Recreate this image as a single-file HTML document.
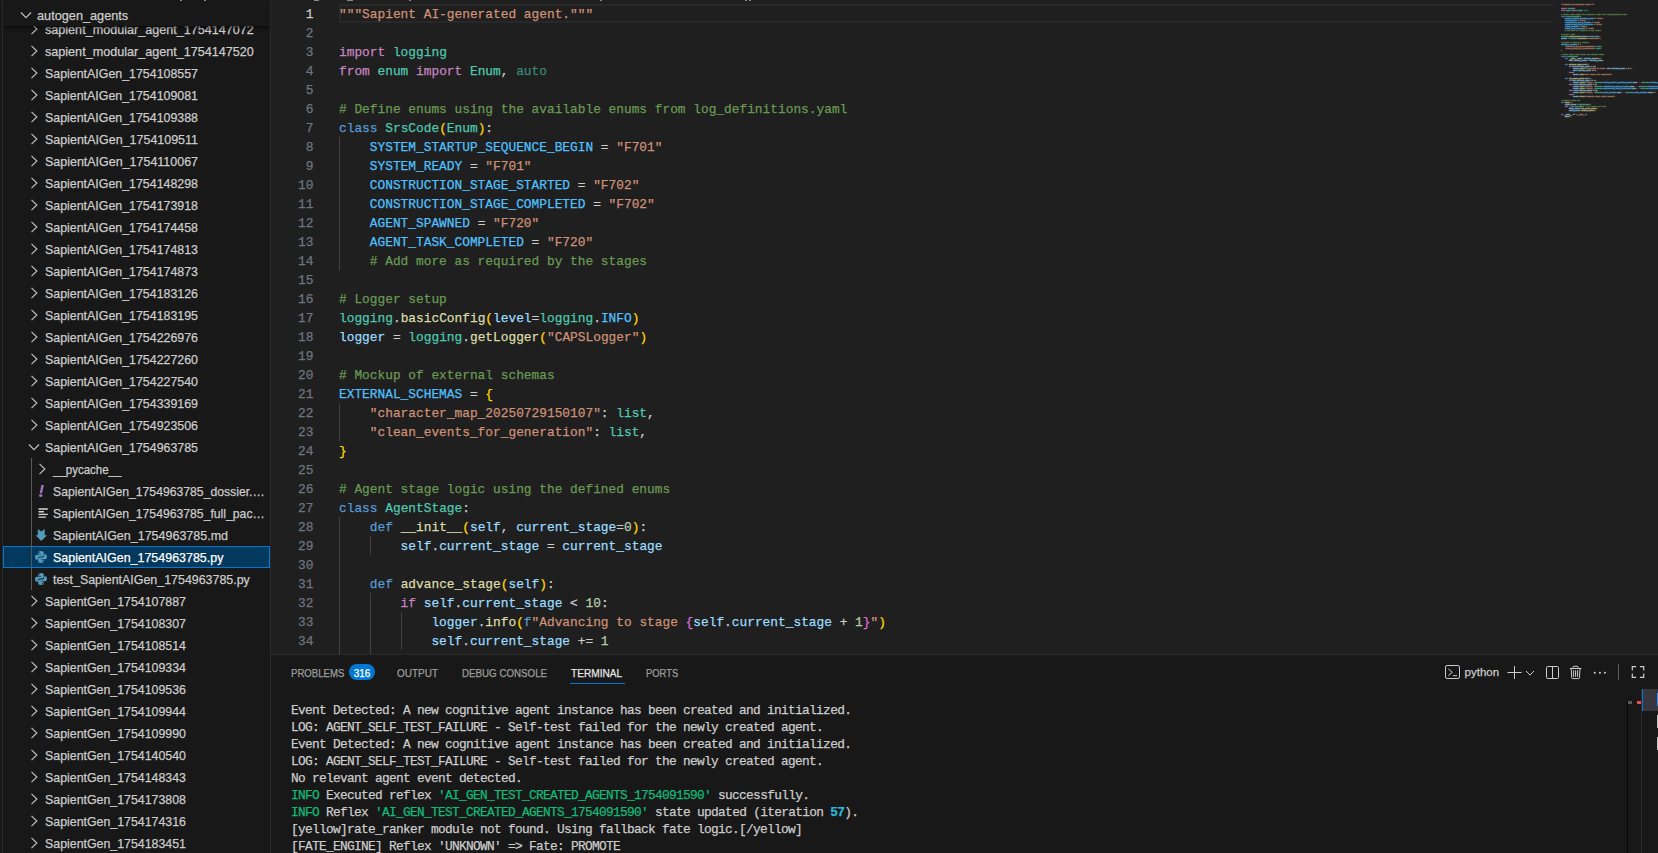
<!DOCTYPE html>
<html lang="en"><head><meta charset="utf-8"><title>SapientAIGen_1754963785.py</title>
<style>
*{box-sizing:border-box}
html,body{margin:0;padding:0}
body{-webkit-text-stroke:0.25px;width:1658px;height:853px;overflow:hidden;background:#181818;position:relative;font-family:"Liberation Sans",sans-serif;color:#cccccc}
.abs{position:absolute}
#side{position:absolute;left:0;top:0;width:271px;height:853px;background:#181818;overflow:hidden}
#side .ab{position:absolute;left:2px;top:0;width:1px;height:853px;background:#2b2b2b}
#side .sb{position:absolute;left:270px;top:0;width:1px;height:853px;background:#2b2b2b}
.row{position:absolute;left:3px;width:267px;height:22px;font-size:13px;line-height:22px;color:#cccccc}
.row i{position:absolute;top:3px;width:16px;height:16px;display:block;margin-left:-3px}
.row i svg{display:block;width:16px;height:16px}
.row .lb{position:absolute;top:1px;white-space:pre;transform-origin:0 50%;margin-left:-3px}
.row.sel{background:#04395e;outline:1px solid #0078d4;outline-offset:-1px;color:#ffffff}
.sticky{position:absolute;left:3px;top:0;width:267px;height:26px;background:#181818;box-shadow:0 3px 3px -1px rgba(0,0,0,.55);z-index:3}
.sticky .row{left:0}
.tg{position:absolute;left:31px;top:458px;width:1px;height:132px;background:#585858}
#ed{position:absolute;left:271px;top:0;width:1387px;height:654px;background:#1f1f1f;overflow:hidden}
.cur{position:absolute;left:68px;top:4px;width:1215px;height:19px;border:2px solid #282828;border-right:0}
.code,.nums{position:absolute;top:5px;font-family:"Liberation Mono",monospace;font-size:13.5px;line-height:19px;white-space:pre;transform-origin:0 0;transform:scaleX(.95062)}
.code{left:68px;color:#cccccc}
.nums{left:0;width:44.7px;text-align:right;color:#6e7681}
.cl,.ln{height:19px}
.ln.act{color:#cccccc}
.ig{position:absolute;width:1px;background:#404040;margin-left:-271px}
.k{color:#c586c0}.b{color:#569cd6}.t{color:#4ec9b0}.s{color:#ce9178}.c{color:#6a9955}.n{color:#4fc1ff}.v{color:#9cdcfe}.f{color:#dcdcaa}.u{color:#b5cea8}.g{color:#ffd700}.p{color:#da70d6}.z{color:#4ec9b0;opacity:.6}
#mini{position:absolute;left:1290px;top:3.3px;width:97px;height:400px;overflow:hidden}
#mini .mm{position:absolute;left:0;top:0;font-family:"Liberation Mono",monospace;font-size:13.5px;line-height:11px;white-space:pre;color:#cccccc;transform-origin:0 0;transform:scale(0.12346,0.181818);opacity:.7;font-weight:bold;-webkit-text-stroke:2.5px}
#mini .cl{height:11px}
#mini .g,#mini .p{opacity:.55}
#pn{position:absolute;left:271px;top:654px;width:1387px;height:199px;background:#181818;border-top:1px solid #2b2b2b;overflow:hidden}
.tab{position:absolute;top:10px;height:16px;font-size:11px;line-height:16px;color:#9d9d9d;white-space:pre;transform-origin:0 50%;margin-left:-271px}
.tab.on{color:#e7e7e7}
.ul{position:absolute;left:299px;top:28px;width:55px;height:1px;background:#0078d4}
.badge{position:absolute;left:78px;top:9px;width:26px;height:16px;border-radius:8px;background:#0078d4;color:#fff;font-size:10px;line-height:19px;text-align:center;overflow:hidden}
.term{position:absolute;left:20px;top:47px;font-family:"Liberation Mono",monospace;font-size:13.5px;letter-spacing:-0.736px;line-height:17px;white-space:pre;color:#cccccc;transform-origin:0 0;transform:scaleX(.95062)}
.tl{height:17px}
.pi{position:absolute;left:1169px;top:0}
.pyl{position:absolute;left:1193.6px;top:8.6px;font-size:11.5px;line-height:16px;color:#cccccc;transform-origin:0 50%;white-space:pre}
.ovr{position:absolute;left:1356px;top:46px;width:1px;height:160px;background:#050608}
.mk{position:absolute;top:46px;width:4px;height:3px}
.tlb{position:absolute;left:1370px;top:34px;width:1px;height:170px;background:#2b2b2b}
.tsel{position:absolute;left:1371px;top:34px;width:16px;height:22px;background:#37373d}
.tblue{position:absolute;left:1371px;top:34px;width:1px;height:22px;background:#0078d4}
.tic{position:absolute;left:1386px;width:1px;height:13px}
.tm{position:absolute;top:0;height:1px;background:#8a8a8a;z-index:5}
.gr{color:#0dbc79}.cy{color:#29b8db;font-weight:bold}
</style></head><body>
<div id="side">
<div class="ab"></div>
<div class="row" style="top:18px"><i style="left:26.2px"><svg class="chev" viewBox="0 0 16 16"><path d="M5.5 2.8 L10.9 8 L5.5 13.2" fill="none" stroke="#c5c5c5" stroke-width="1.1"/></svg></i><span class="lb" style="left:45.0px;transform:scaleX(0.9693)">sapient_modular_agent_1754147072</span></div>
<div class="row" style="top:40px"><i style="left:26.2px"><svg class="chev" viewBox="0 0 16 16"><path d="M5.5 2.8 L10.9 8 L5.5 13.2" fill="none" stroke="#c5c5c5" stroke-width="1.1"/></svg></i><span class="lb" style="left:45.0px;transform:scaleX(0.9693)">sapient_modular_agent_1754147520</span></div>
<div class="row" style="top:62px"><i style="left:26.2px"><svg class="chev" viewBox="0 0 16 16"><path d="M5.5 2.8 L10.9 8 L5.5 13.2" fill="none" stroke="#c5c5c5" stroke-width="1.1"/></svg></i><span class="lb" style="left:45.0px;transform:scaleX(0.9534)">SapientAIGen_1754108557</span></div>
<div class="row" style="top:84px"><i style="left:26.2px"><svg class="chev" viewBox="0 0 16 16"><path d="M5.5 2.8 L10.9 8 L5.5 13.2" fill="none" stroke="#c5c5c5" stroke-width="1.1"/></svg></i><span class="lb" style="left:45.0px;transform:scaleX(0.9534)">SapientAIGen_1754109081</span></div>
<div class="row" style="top:106px"><i style="left:26.2px"><svg class="chev" viewBox="0 0 16 16"><path d="M5.5 2.8 L10.9 8 L5.5 13.2" fill="none" stroke="#c5c5c5" stroke-width="1.1"/></svg></i><span class="lb" style="left:45.0px;transform:scaleX(0.9534)">SapientAIGen_1754109388</span></div>
<div class="row" style="top:128px"><i style="left:26.2px"><svg class="chev" viewBox="0 0 16 16"><path d="M5.5 2.8 L10.9 8 L5.5 13.2" fill="none" stroke="#c5c5c5" stroke-width="1.1"/></svg></i><span class="lb" style="left:45.0px;transform:scaleX(0.9592)">SapientAIGen_1754109511</span></div>
<div class="row" style="top:150px"><i style="left:26.2px"><svg class="chev" viewBox="0 0 16 16"><path d="M5.5 2.8 L10.9 8 L5.5 13.2" fill="none" stroke="#c5c5c5" stroke-width="1.1"/></svg></i><span class="lb" style="left:45.0px;transform:scaleX(0.9592)">SapientAIGen_1754110067</span></div>
<div class="row" style="top:172px"><i style="left:26.2px"><svg class="chev" viewBox="0 0 16 16"><path d="M5.5 2.8 L10.9 8 L5.5 13.2" fill="none" stroke="#c5c5c5" stroke-width="1.1"/></svg></i><span class="lb" style="left:45.0px;transform:scaleX(0.9534)">SapientAIGen_1754148298</span></div>
<div class="row" style="top:194px"><i style="left:26.2px"><svg class="chev" viewBox="0 0 16 16"><path d="M5.5 2.8 L10.9 8 L5.5 13.2" fill="none" stroke="#c5c5c5" stroke-width="1.1"/></svg></i><span class="lb" style="left:45.0px;transform:scaleX(0.9534)">SapientAIGen_1754173918</span></div>
<div class="row" style="top:216px"><i style="left:26.2px"><svg class="chev" viewBox="0 0 16 16"><path d="M5.5 2.8 L10.9 8 L5.5 13.2" fill="none" stroke="#c5c5c5" stroke-width="1.1"/></svg></i><span class="lb" style="left:45.0px;transform:scaleX(0.9534)">SapientAIGen_1754174458</span></div>
<div class="row" style="top:238px"><i style="left:26.2px"><svg class="chev" viewBox="0 0 16 16"><path d="M5.5 2.8 L10.9 8 L5.5 13.2" fill="none" stroke="#c5c5c5" stroke-width="1.1"/></svg></i><span class="lb" style="left:45.0px;transform:scaleX(0.9534)">SapientAIGen_1754174813</span></div>
<div class="row" style="top:260px"><i style="left:26.2px"><svg class="chev" viewBox="0 0 16 16"><path d="M5.5 2.8 L10.9 8 L5.5 13.2" fill="none" stroke="#c5c5c5" stroke-width="1.1"/></svg></i><span class="lb" style="left:45.0px;transform:scaleX(0.9534)">SapientAIGen_1754174873</span></div>
<div class="row" style="top:282px"><i style="left:26.2px"><svg class="chev" viewBox="0 0 16 16"><path d="M5.5 2.8 L10.9 8 L5.5 13.2" fill="none" stroke="#c5c5c5" stroke-width="1.1"/></svg></i><span class="lb" style="left:45.0px;transform:scaleX(0.9534)">SapientAIGen_1754183126</span></div>
<div class="row" style="top:304px"><i style="left:26.2px"><svg class="chev" viewBox="0 0 16 16"><path d="M5.5 2.8 L10.9 8 L5.5 13.2" fill="none" stroke="#c5c5c5" stroke-width="1.1"/></svg></i><span class="lb" style="left:45.0px;transform:scaleX(0.9534)">SapientAIGen_1754183195</span></div>
<div class="row" style="top:326px"><i style="left:26.2px"><svg class="chev" viewBox="0 0 16 16"><path d="M5.5 2.8 L10.9 8 L5.5 13.2" fill="none" stroke="#c5c5c5" stroke-width="1.1"/></svg></i><span class="lb" style="left:45.0px;transform:scaleX(0.9534)">SapientAIGen_1754226976</span></div>
<div class="row" style="top:348px"><i style="left:26.2px"><svg class="chev" viewBox="0 0 16 16"><path d="M5.5 2.8 L10.9 8 L5.5 13.2" fill="none" stroke="#c5c5c5" stroke-width="1.1"/></svg></i><span class="lb" style="left:45.0px;transform:scaleX(0.9534)">SapientAIGen_1754227260</span></div>
<div class="row" style="top:370px"><i style="left:26.2px"><svg class="chev" viewBox="0 0 16 16"><path d="M5.5 2.8 L10.9 8 L5.5 13.2" fill="none" stroke="#c5c5c5" stroke-width="1.1"/></svg></i><span class="lb" style="left:45.0px;transform:scaleX(0.9534)">SapientAIGen_1754227540</span></div>
<div class="row" style="top:392px"><i style="left:26.2px"><svg class="chev" viewBox="0 0 16 16"><path d="M5.5 2.8 L10.9 8 L5.5 13.2" fill="none" stroke="#c5c5c5" stroke-width="1.1"/></svg></i><span class="lb" style="left:45.0px;transform:scaleX(0.9534)">SapientAIGen_1754339169</span></div>
<div class="row" style="top:414px"><i style="left:26.2px"><svg class="chev" viewBox="0 0 16 16"><path d="M5.5 2.8 L10.9 8 L5.5 13.2" fill="none" stroke="#c5c5c5" stroke-width="1.1"/></svg></i><span class="lb" style="left:45.0px;transform:scaleX(0.9534)">SapientAIGen_1754923506</span></div>
<div class="row" style="top:436px"><i style="left:26.2px"><svg class="chev" viewBox="0 0 16 16"><path d="M2.9 5.5 L8 10.6 L13.1 5.5" fill="none" stroke="#c5c5c5" stroke-width="1.1"/></svg></i><span class="lb" style="left:45.0px;transform:scaleX(0.9534)">SapientAIGen_1754963785</span></div>
<div class="row" style="top:458px"><i style="left:34.2px"><svg class="chev" viewBox="0 0 16 16"><path d="M5.5 2.8 L10.9 8 L5.5 13.2" fill="none" stroke="#c5c5c5" stroke-width="1.1"/></svg></i><span class="lb" style="left:53.0px;transform:scaleX(0.8844)">__pycache__</span></div>
<div class="row" style="top:480px"><i style="left:32.5px"><svg class="fi" viewBox="0 0 16 16"><path d="M8.3 1.9 L10.9 1.9 L9.1 10.2 L6.8 10.2 Z" fill="#a074c4"/><ellipse cx="7.7" cy="12.6" rx="1.7" ry="1.5" fill="#a074c4"/></svg></i><span class="lb" style="left:53.0px;transform:scaleX(0.9387)">SapientAIGen_1754963785_dossier.…</span></div>
<div class="row" style="top:502px"><i style="left:32.5px"><svg class="fi" viewBox="0 0 16 16"><g stroke="#d4d7d6" stroke-width="1.35"><path d="M5.5 4H14.8M5.5 6.7H11M5.5 9.4H14.8M5.5 12.1H12.9"/></g></svg></i><span class="lb" style="left:53.0px;transform:scaleX(0.9387)">SapientAIGen_1754963785_full_pac…</span></div>
<div class="row" style="top:524px"><i style="left:32.5px"><svg class="fi" viewBox="0 0 16 16"><path d="M4.8 2.1 L8.3 4.4 L11.7 2.1 L11.7 8.3 L14.1 8.3 L8.3 14.1 L2.5 8.3 L4.8 8.3 Z" fill="#519aba"/></svg></i><span class="lb" style="left:53.0px;transform:scaleX(0.9607)">SapientAIGen_1754963785.md</span></div>
<div class="row sel" style="top:546px"><i style="left:33.0px"><svg class="fi" viewBox="0 0 16 16"><g fill="#519aba"><path d="M7.9 2C5.9 2 5.4 2.9 5.4 3.7V5.2H8.1V5.8H3.9C2.9 5.8 2 6.6 2 8.3C2 10 2.8 10.8 3.8 10.8H4.9V9.2C4.9 8.2 5.8 7.4 6.8 7.4H9.4C10.2 7.4 10.8 6.8 10.8 6V3.7C10.8 2.8 10 2 7.9 2ZM6.5 2.9A.5.5 0 1 1 6.5 3.9A.5.5 0 0 1 6.5 2.9Z"/><path d="M8.1 14C10.1 14 10.6 13.1 10.6 12.3V10.8H7.9V10.2H12.1C13.1 10.2 14 9.4 14 7.7C14 6 13.2 5.2 12.2 5.2H11.1V6.8C11.1 7.8 10.2 8.6 9.2 8.6H6.6C5.8 8.6 5.2 9.2 5.2 10V12.3C5.2 13.2 6 14 8.1 14ZM9.5 13.1A.5.5 0 1 1 9.5 12.1A.5.5 0 0 1 9.5 13.1Z"/></g></svg></i><span class="lb" style="left:53.0px;transform:scaleX(0.9582)">SapientAIGen_1754963785.py</span></div>
<div class="row" style="top:568px"><i style="left:33.0px"><svg class="fi" viewBox="0 0 16 16"><g fill="#519aba"><path d="M7.9 2C5.9 2 5.4 2.9 5.4 3.7V5.2H8.1V5.8H3.9C2.9 5.8 2 6.6 2 8.3C2 10 2.8 10.8 3.8 10.8H4.9V9.2C4.9 8.2 5.8 7.4 6.8 7.4H9.4C10.2 7.4 10.8 6.8 10.8 6V3.7C10.8 2.8 10 2 7.9 2ZM6.5 2.9A.5.5 0 1 1 6.5 3.9A.5.5 0 0 1 6.5 2.9Z"/><path d="M8.1 14C10.1 14 10.6 13.1 10.6 12.3V10.8H7.9V10.2H12.1C13.1 10.2 14 9.4 14 7.7C14 6 13.2 5.2 12.2 5.2H11.1V6.8C11.1 7.8 10.2 8.6 9.2 8.6H6.6C5.8 8.6 5.2 9.2 5.2 10V12.3C5.2 13.2 6 14 8.1 14ZM9.5 13.1A.5.5 0 1 1 9.5 12.1A.5.5 0 0 1 9.5 13.1Z"/></g></svg></i><span class="lb" style="left:53.0px;transform:scaleX(0.9553)">test_SapientAIGen_1754963785.py</span></div>
<div class="row" style="top:590px"><i style="left:26.2px"><svg class="chev" viewBox="0 0 16 16"><path d="M5.5 2.8 L10.9 8 L5.5 13.2" fill="none" stroke="#c5c5c5" stroke-width="1.1"/></svg></i><span class="lb" style="left:45.0px;transform:scaleX(0.9514)">SapientGen_1754107887</span></div>
<div class="row" style="top:612px"><i style="left:26.2px"><svg class="chev" viewBox="0 0 16 16"><path d="M5.5 2.8 L10.9 8 L5.5 13.2" fill="none" stroke="#c5c5c5" stroke-width="1.1"/></svg></i><span class="lb" style="left:45.0px;transform:scaleX(0.9514)">SapientGen_1754108307</span></div>
<div class="row" style="top:634px"><i style="left:26.2px"><svg class="chev" viewBox="0 0 16 16"><path d="M5.5 2.8 L10.9 8 L5.5 13.2" fill="none" stroke="#c5c5c5" stroke-width="1.1"/></svg></i><span class="lb" style="left:45.0px;transform:scaleX(0.9514)">SapientGen_1754108514</span></div>
<div class="row" style="top:656px"><i style="left:26.2px"><svg class="chev" viewBox="0 0 16 16"><path d="M5.5 2.8 L10.9 8 L5.5 13.2" fill="none" stroke="#c5c5c5" stroke-width="1.1"/></svg></i><span class="lb" style="left:45.0px;transform:scaleX(0.9514)">SapientGen_1754109334</span></div>
<div class="row" style="top:678px"><i style="left:26.2px"><svg class="chev" viewBox="0 0 16 16"><path d="M5.5 2.8 L10.9 8 L5.5 13.2" fill="none" stroke="#c5c5c5" stroke-width="1.1"/></svg></i><span class="lb" style="left:45.0px;transform:scaleX(0.9514)">SapientGen_1754109536</span></div>
<div class="row" style="top:700px"><i style="left:26.2px"><svg class="chev" viewBox="0 0 16 16"><path d="M5.5 2.8 L10.9 8 L5.5 13.2" fill="none" stroke="#c5c5c5" stroke-width="1.1"/></svg></i><span class="lb" style="left:45.0px;transform:scaleX(0.9514)">SapientGen_1754109944</span></div>
<div class="row" style="top:722px"><i style="left:26.2px"><svg class="chev" viewBox="0 0 16 16"><path d="M5.5 2.8 L10.9 8 L5.5 13.2" fill="none" stroke="#c5c5c5" stroke-width="1.1"/></svg></i><span class="lb" style="left:45.0px;transform:scaleX(0.9514)">SapientGen_1754109990</span></div>
<div class="row" style="top:744px"><i style="left:26.2px"><svg class="chev" viewBox="0 0 16 16"><path d="M5.5 2.8 L10.9 8 L5.5 13.2" fill="none" stroke="#c5c5c5" stroke-width="1.1"/></svg></i><span class="lb" style="left:45.0px;transform:scaleX(0.9514)">SapientGen_1754140540</span></div>
<div class="row" style="top:766px"><i style="left:26.2px"><svg class="chev" viewBox="0 0 16 16"><path d="M5.5 2.8 L10.9 8 L5.5 13.2" fill="none" stroke="#c5c5c5" stroke-width="1.1"/></svg></i><span class="lb" style="left:45.0px;transform:scaleX(0.9514)">SapientGen_1754148343</span></div>
<div class="row" style="top:788px"><i style="left:26.2px"><svg class="chev" viewBox="0 0 16 16"><path d="M5.5 2.8 L10.9 8 L5.5 13.2" fill="none" stroke="#c5c5c5" stroke-width="1.1"/></svg></i><span class="lb" style="left:45.0px;transform:scaleX(0.9514)">SapientGen_1754173808</span></div>
<div class="row" style="top:810px"><i style="left:26.2px"><svg class="chev" viewBox="0 0 16 16"><path d="M5.5 2.8 L10.9 8 L5.5 13.2" fill="none" stroke="#c5c5c5" stroke-width="1.1"/></svg></i><span class="lb" style="left:45.0px;transform:scaleX(0.9514)">SapientGen_1754174316</span></div>
<div class="row" style="top:832px"><i style="left:26.2px"><svg class="chev" viewBox="0 0 16 16"><path d="M5.5 2.8 L10.9 8 L5.5 13.2" fill="none" stroke="#c5c5c5" stroke-width="1.1"/></svg></i><span class="lb" style="left:45.0px;transform:scaleX(0.9514)">SapientGen_1754183451</span></div>
<div class="tg"></div>
<div class="sticky"><div class="row" style="top:4px"><i style="left:18px"><svg class="chev" viewBox="0 0 16 16"><path d="M2.9 5.5 L8 10.6 L13.1 5.5" fill="none" stroke="#c5c5c5" stroke-width="1.1"/></svg></i><span class="lb" style="left:37px;transform:scaleX(0.9779)">autogen_agents</span></div></div>
<div class="sb"></div>
</div>
<div id="ed">
<div class="cur"></div>
<div class="ig" style="left:339px;top:137px;height:133px"></div>
<div class="ig" style="left:339px;top:403px;height:38px"></div>
<div class="ig" style="left:339px;top:517px;height:171px"></div>
<div class="ig" style="left:370px;top:536px;height:19px"></div>
<div class="ig" style="left:370px;top:593px;height:95px"></div>
<div class="ig" style="left:401px;top:612px;height:38px"></div>
<div class="nums"><div class="ln act">1</div><div class="ln">2</div><div class="ln">3</div><div class="ln">4</div><div class="ln">5</div><div class="ln">6</div><div class="ln">7</div><div class="ln">8</div><div class="ln">9</div><div class="ln">10</div><div class="ln">11</div><div class="ln">12</div><div class="ln">13</div><div class="ln">14</div><div class="ln">15</div><div class="ln">16</div><div class="ln">17</div><div class="ln">18</div><div class="ln">19</div><div class="ln">20</div><div class="ln">21</div><div class="ln">22</div><div class="ln">23</div><div class="ln">24</div><div class="ln">25</div><div class="ln">26</div><div class="ln">27</div><div class="ln">28</div><div class="ln">29</div><div class="ln">30</div><div class="ln">31</div><div class="ln">32</div><div class="ln">33</div><div class="ln">34</div><div class="ln">35</div></div>
<div class="code"><div class="cl"><span class="s">&quot;&quot;&quot;Sapient AI-generated agent.&quot;&quot;&quot;</span></div><div class="cl"></div><div class="cl"><span class="k">import</span> <span class="t">logging</span></div><div class="cl"><span class="k">from</span> <span class="t">enum</span> <span class="k">import</span> <span class="t">Enum</span>, <span class="z">auto</span></div><div class="cl"></div><div class="cl"><span class="c"># Define enums using the available enums from log_definitions.yaml</span></div><div class="cl"><span class="b">class</span> <span class="t">SrsCode</span><span class="g">(</span><span class="t">Enum</span><span class="g">)</span>:</div><div class="cl">    <span class="n">SYSTEM_STARTUP_SEQUENCE_BEGIN</span> = <span class="s">&quot;F701&quot;</span></div><div class="cl">    <span class="n">SYSTEM_READY</span> = <span class="s">&quot;F701&quot;</span></div><div class="cl">    <span class="n">CONSTRUCTION_STAGE_STARTED</span> = <span class="s">&quot;F702&quot;</span></div><div class="cl">    <span class="n">CONSTRUCTION_STAGE_COMPLETED</span> = <span class="s">&quot;F702&quot;</span></div><div class="cl">    <span class="n">AGENT_SPAWNED</span> = <span class="s">&quot;F720&quot;</span></div><div class="cl">    <span class="n">AGENT_TASK_COMPLETED</span> = <span class="s">&quot;F720&quot;</span></div><div class="cl">    <span class="c"># Add more as required by the stages</span></div><div class="cl"></div><div class="cl"><span class="c"># Logger setup</span></div><div class="cl"><span class="t">logging</span>.<span class="f">basicConfig</span><span class="g">(</span><span class="v">level</span>=<span class="t">logging</span>.<span class="n">INFO</span><span class="g">)</span></div><div class="cl"><span class="v">logger</span> = <span class="t">logging</span>.<span class="f">getLogger</span><span class="g">(</span><span class="s">&quot;CAPSLogger&quot;</span><span class="g">)</span></div><div class="cl"></div><div class="cl"><span class="c"># Mockup of external schemas</span></div><div class="cl"><span class="n">EXTERNAL_SCHEMAS</span> = <span class="g">{</span></div><div class="cl">    <span class="s">&quot;character_map_20250729150107&quot;</span>: <span class="t">list</span>,</div><div class="cl">    <span class="s">&quot;clean_events_for_generation&quot;</span>: <span class="t">list</span>,</div><div class="cl"><span class="g">}</span></div><div class="cl"></div><div class="cl"><span class="c"># Agent stage logic using the defined enums</span></div><div class="cl"><span class="b">class</span> <span class="t">AgentStage</span>:</div><div class="cl">    <span class="b">def</span> <span class="f">__init__</span><span class="g">(</span><span class="v">self</span>, <span class="v">current_stage</span>=<span class="u">0</span><span class="g">)</span>:</div><div class="cl">        <span class="v">self</span>.<span class="v">current_stage</span> = <span class="v">current_stage</span></div><div class="cl"></div><div class="cl">    <span class="b">def</span> <span class="f">advance_stage</span><span class="g">(</span><span class="v">self</span><span class="g">)</span>:</div><div class="cl">        <span class="k">if</span> <span class="v">self</span>.<span class="v">current_stage</span> &lt; <span class="u">10</span>:</div><div class="cl">            <span class="v">logger</span>.<span class="f">info</span><span class="g">(</span><span class="b">f</span><span class="s">&quot;Advancing to stage </span><span class="p">{</span><span class="v">self</span>.<span class="v">current_stage</span> + <span class="u">1</span><span class="p">}</span><span class="s">&quot;</span><span class="g">)</span></div><div class="cl">            <span class="v">self</span>.<span class="v">current_stage</span> += <span class="u">1</span></div><div class="cl">        <span class="k">else</span>:</div></div>
<div id="mini"><div class="mm"><div class="cl"><span class="s">&quot;&quot;&quot;Sapient AI-generated agent.&quot;&quot;&quot;</span></div><div class="cl"></div><div class="cl"><span class="k">import</span> <span class="t">logging</span></div><div class="cl"><span class="k">from</span> <span class="t">enum</span> <span class="k">import</span> <span class="t">Enum</span>, <span class="z">auto</span></div><div class="cl"></div><div class="cl"><span class="c"># Define enums using the available enums from log_definitions.yaml</span></div><div class="cl"><span class="b">class</span> <span class="t">SrsCode</span><span class="g">(</span><span class="t">Enum</span><span class="g">)</span>:</div><div class="cl">    <span class="n">SYSTEM_STARTUP_SEQUENCE_BEGIN</span> = <span class="s">&quot;F701&quot;</span></div><div class="cl">    <span class="n">SYSTEM_READY</span> = <span class="s">&quot;F701&quot;</span></div><div class="cl">    <span class="n">CONSTRUCTION_STAGE_STARTED</span> = <span class="s">&quot;F702&quot;</span></div><div class="cl">    <span class="n">CONSTRUCTION_STAGE_COMPLETED</span> = <span class="s">&quot;F702&quot;</span></div><div class="cl">    <span class="n">AGENT_SPAWNED</span> = <span class="s">&quot;F720&quot;</span></div><div class="cl">    <span class="n">AGENT_TASK_COMPLETED</span> = <span class="s">&quot;F720&quot;</span></div><div class="cl">    <span class="c"># Add more as required by the stages</span></div><div class="cl"></div><div class="cl"><span class="c"># Logger setup</span></div><div class="cl"><span class="t">logging</span>.<span class="f">basicConfig</span><span class="g">(</span><span class="v">level</span>=<span class="t">logging</span>.<span class="n">INFO</span><span class="g">)</span></div><div class="cl"><span class="v">logger</span> = <span class="t">logging</span>.<span class="f">getLogger</span><span class="g">(</span><span class="s">&quot;CAPSLogger&quot;</span><span class="g">)</span></div><div class="cl"></div><div class="cl"><span class="c"># Mockup of external schemas</span></div><div class="cl"><span class="n">EXTERNAL_SCHEMAS</span> = <span class="g">{</span></div><div class="cl">    <span class="s">&quot;character_map_20250729150107&quot;</span>: <span class="t">list</span>,</div><div class="cl">    <span class="s">&quot;clean_events_for_generation&quot;</span>: <span class="t">list</span>,</div><div class="cl"><span class="g">}</span></div><div class="cl"></div><div class="cl"><span class="c"># Agent stage logic using the defined enums</span></div><div class="cl"><span class="b">class</span> <span class="t">AgentStage</span>:</div><div class="cl">    <span class="b">def</span> <span class="f">__init__</span><span class="g">(</span><span class="v">self</span>, <span class="v">current_stage</span>=<span class="u">0</span><span class="g">)</span>:</div><div class="cl">        <span class="v">self</span>.<span class="v">current_stage</span> = <span class="v">current_stage</span></div><div class="cl"></div><div class="cl">    <span class="b">def</span> <span class="f">advance_stage</span><span class="g">(</span><span class="v">self</span><span class="g">)</span>:</div><div class="cl">        <span class="k">if</span> <span class="v">self</span>.<span class="v">current_stage</span> &lt; <span class="u">10</span>:</div><div class="cl">            <span class="v">logger</span>.<span class="f">info</span><span class="g">(</span><span class="b">f</span><span class="s">&quot;Advancing to stage </span><span class="p">{</span><span class="v">self</span>.<span class="v">current_stage</span> + <span class="u">1</span><span class="p">}</span><span class="s">&quot;</span><span class="g">)</span></div><div class="cl">            <span class="v">self</span>.<span class="v">current_stage</span> += <span class="u">1</span></div><div class="cl">        <span class="k">else</span>:</div><div class="cl">            <span class="v">logger</span>.<span class="f">info</span><span class="g">(</span><span class="s">&quot;All stages are completed&quot;</span><span class="g">)</span></div><div class="cl"></div><div class="cl">    <span class="b">def</span> <span class="f">log_stage_event</span><span class="g">(</span><span class="v">self</span><span class="g">)</span>:</div><div class="cl">        <span class="k">if</span> <span class="v">self</span>.<span class="v">current_stage</span> == <span class="u">0</span>:</div><div class="cl">            <span class="v">logger</span>.<span class="f">info</span><span class="g">(</span><span class="b">f</span><span class="s">&quot;Event: </span><span class="p">{</span><span class="t">SrsCode</span>.<span class="n">SYSTEM_STARTUP_SEQUENCE_BEGIN</span>.<span class="v">name</span><span class="p">}</span><span class="s"> - </span><span class="p">{</span><span class="t">SrsCode</span>.<span class="n">SYSTEM_STARTUP_SEQUENCE_BEGIN</span>.<span class="v">value</span><span class="p">}</span><span class="s">&quot;</span><span class="g">)</span></div><div class="cl">        <span class="k">elif</span> <span class="v">self</span>.<span class="v">current_stage</span> &lt; <span class="u">5</span>:</div><div class="cl">            <span class="v">logger</span>.<span class="f">info</span><span class="g">(</span><span class="b">f</span><span class="s">&quot;Event: </span><span class="p">{</span><span class="t">SrsCode</span>.<span class="n">CONSTRUCTION_STAGE_STARTED</span>.<span class="v">name</span><span class="p">}</span><span class="s"> - </span><span class="p">{</span><span class="t">SrsCode</span>.<span class="n">CONSTRUCTION_STAGE_STARTED</span>.<span class="v">value</span><span class="p">}</span><span class="s">&quot;</span><span class="g">)</span></div><div class="cl">            <span class="v">logger</span>.<span class="f">info</span><span class="g">(</span><span class="b">f</span><span class="s">&quot;Event: </span><span class="p">{</span><span class="t">SrsCode</span>.<span class="n">CONSTRUCTION_STAGE_COMPLETED</span>.<span class="v">name</span><span class="p">}</span><span class="s"> - </span><span class="p">{</span><span class="t">SrsCode</span>.<span class="n">CONSTRUCTION_STAGE_COMPLETED</span>.<span class="v">value</span><span class="p">}</span><span class="s">&quot;</span><span class="g">)</span></div><div class="cl">        <span class="k">elif</span> <span class="v">self</span>.<span class="v">current_stage</span> &lt; <span class="u">10</span>:</div><div class="cl">            <span class="v">logger</span>.<span class="f">info</span><span class="g">(</span><span class="b">f</span><span class="s">&quot;Event: </span><span class="p">{</span><span class="t">SrsCode</span>.<span class="n">AGENT_SPAWNED</span>.<span class="v">name</span><span class="p">}</span><span class="s"> - </span><span class="p">{</span><span class="t">SrsCode</span>.<span class="n">AGENT_SPAWNED</span>.<span class="v">value</span><span class="p">}</span><span class="s">&quot;</span><span class="g">)</span></div><div class="cl">        <span class="k">else</span>:</div><div class="cl">            <span class="v">logger</span>.<span class="f">error</span><span class="g">(</span><span class="s">&quot;Unknown stage event logged&quot;</span><span class="g">)</span></div><div class="cl"></div><div class="cl"><span class="c"># Example agent use</span></div><div class="cl"><span class="b">def</span> <span class="f">main</span><span class="g">(</span><span class="g">)</span>:</div><div class="cl">    <span class="v">agent_stage</span> = <span class="t">AgentStage</span><span class="g">(</span><span class="g">)</span></div><div class="cl">    <span class="k">for</span> <span class="v">_</span> <span class="k">in</span> <span class="t">range</span><span class="g">(</span><span class="u">10</span><span class="g">)</span>:  <span class="c"># 10 stages for test</span></div><div class="cl">        <span class="v">agent_stage</span>.<span class="f">log_stage_event</span><span class="g">(</span><span class="g">)</span></div><div class="cl">        <span class="v">agent_stage</span>.<span class="f">advance_stage</span><span class="g">(</span><span class="g">)</span></div><div class="cl"></div><div class="cl"><span class="k">if</span> <span class="v">__name__</span> == <span class="s">&quot;__main__&quot;</span>:</div><div class="cl">    <span class="f">main</span><span class="g">(</span><span class="g">)</span></div></div></div>
</div>
<div class="tm" style="left:180px;width:2px"></div><div class="tm" style="left:204px;width:2px"></div><div class="tm" style="left:314px;width:5px"></div><div class="tm" style="left:347px;width:6px"></div><div class="tm" style="left:409px;width:2px"></div><div class="tm" style="left:600px;width:2px"></div><div class="tm" style="left:745px;width:2px"></div><div class="tm" style="left:749px;width:2px"></div>
<div id="pn">
<span class="tab" style="left:290.5px;transform:scaleX(0.8734)">PROBLEMS</span><span class="tab" style="left:396.5px;transform:scaleX(0.9064)">OUTPUT</span><span class="tab" style="left:461.9px;transform:scaleX(0.8867)">DEBUG CONSOLE</span><span class="tab on" style="left:571.1px;transform:scaleX(0.9187)">TERMINAL</span><span class="tab" style="left:646.3px;transform:scaleX(0.8540)">PORTS</span>
<div class="badge">316</div>
<div class="ul"></div>
<svg class="pi" width="218" height="35" viewBox="0 0 218 35" fill="none" stroke="#cccccc" stroke-width="1">
<rect x="5.5" y="10.5" width="14" height="13" rx="1.6"/>
<path d="M8.4 14 L12.3 17.3 L8.4 20.6 M13 20.7 H17"/>
<path d="M67.4 17.5 H81.6 M74.5 11 V24"/>
<path d="M86 16 L90 20.1 L94 16"/>
<rect x="106.5" y="11.5" width="12" height="12" rx="1.2"/>
<path d="M112.5 11.5 V23.5"/>
<path d="M129.8 13.5 H141.4 M133 13.5 V12.3 Q133 11.3 134 11.3 H137.2 Q138.2 11.3 138.2 12.3 V13.5 M131.2 13.5 L131.7 22.8 Q131.8 23.6 132.6 23.6 H138.6 Q139.4 23.6 139.5 22.8 L140 13.5 M133.6 15.3 V21.8 M135.6 15.3 V21.8 M137.6 15.3 V21.8"/>
<g fill="#cccccc" stroke="none"><circle cx="154.8" cy="17.8" r="1.05"/><circle cx="159.9" cy="17.8" r="1.05"/><circle cx="164.9" cy="17.8" r="1.05"/></g>
<rect x="178" y="9" width="1" height="16" fill="#5a5a5a" stroke="none"/>
<path stroke-width="1.2" d="M192.3 15.4 V11.7 H196.1 M199.9 11.7 H203.7 V15.4 M203.7 18.6 V22.3 H199.9 M196.1 22.3 H192.3 V18.6"/>
</svg>
<span class="pyl" style="transform:scaleX(1.0)">python</span>
<div class="term"><div class="tl">Event Detected: A new cognitive agent instance has been created and initialized.</div><div class="tl">LOG: AGENT_SELF_TEST_FAILURE - Self-test failed for the newly created agent.</div><div class="tl">Event Detected: A new cognitive agent instance has been created and initialized.</div><div class="tl">LOG: AGENT_SELF_TEST_FAILURE - Self-test failed for the newly created agent.</div><div class="tl">No relevant agent event detected.</div><div class="tl"><span class="gr">INFO</span> Executed reflex <span class="gr">'AI_GEN_TEST_CREATED_AGENTS_1754091590'</span> successfully.</div><div class="tl"><span class="gr">INFO</span> Reflex <span class="gr">'AI_GEN_TEST_CREATED_AGENTS_1754091590'</span> state updated (iteration <span class="cy">57</span>).</div><div class="tl">[yellow]rate_ranker module not found. Using fallback fate logic.[/yellow]</div><div class="tl">[FATE_ENGINE] Reflex 'UNKNOWN' =&gt; Fate: PROMOTE</div></div>
<div class="ovr"></div><div class="mk" style="left:1357px;background:#5a5a5a"></div><div class="mk" style="left:1366px;background:#f14c4c"></div>
<div class="tlb"></div><div class="tsel"></div><div class="tblue"></div>
<div class="tic" style="top:38px;background:#3794ff"></div><div class="tic" style="top:60px;background:#c5c5c5"></div><div class="tic" style="top:82px;background:#c5c5c5"></div>
</div>
</body></html>
